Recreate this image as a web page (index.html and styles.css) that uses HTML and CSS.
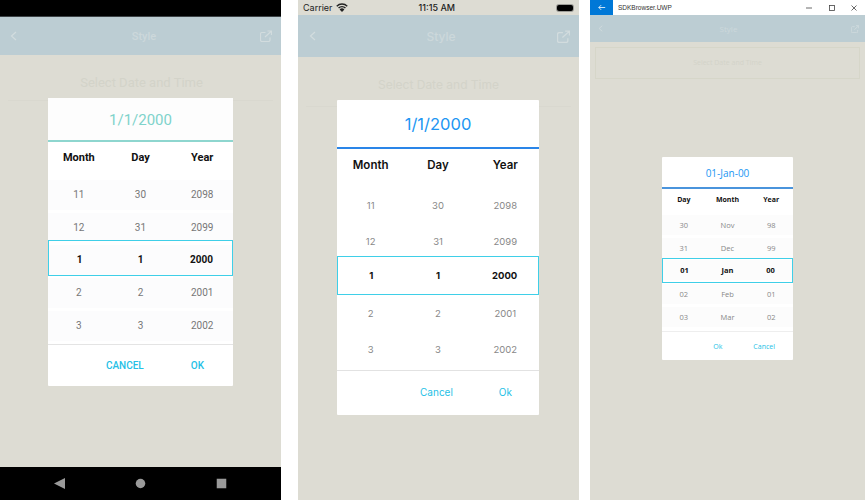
FILE: index.html
```html
<!DOCTYPE html>
<html lang="en">

<head>
    <meta charset="UTF-8">
    <meta name="viewport" content="width=device-width, initial-scale=1.0">
    <link rel="stylesheet" href="styles.css">

    <title>Date and Time Picker</title>
</head>

<body>
<div class="shots">

    <!-- android -->
    <div class="phone android">
        <div class="topbar"></div>
        <div class="header">
            <svg class="back" viewBox="0 0 7 10"><path d="M6 1 1.500 5 6 9"/></svg>
            <span class="page-title">Style</span>
            <svg class="share" viewBox="0 0 12 12"><path d="M5.500 2.500H2A1.500 1.500 0 0 0 .5 4v6A1.500 1.500 0 0 0 2 11.500h6.500A1.500 1.500 0 0 0 10 10V7.500M5 7l6-5.500M7.500 1h4v4"/></svg>
        </div>
        <div class="content">
            <div class="select">Select Date and Time</div>
        </div>
        <div class="navbar">
            <svg class="nav-icon" viewBox="0 0 12 12"><path d="M0 6 12 0v12z"/></svg>
            <svg class="nav-icon" viewBox="0 0 12 12"><circle cx="6" cy="6" r="5.200"/></svg>
            <svg class="nav-icon" viewBox="0 0 12 12"><rect x="0.800" y="0.800" width="10.400" height="10.400"/></svg>
        </div>
        <div class="dialog">
            <div class="dialog-title">1/1/2000</div>
            <div class="heads"><span>Month</span><span>Day</span><span>Year</span></div>
            <div class="wheel">
                <div class="row"><span>11</span><span>30</span><span>2098</span></div>
                <div class="row"><span>12</span><span>31</span><span>2099</span></div>
                <div class="row current"><span>1</span><span>1</span><span>2000</span></div>
                <div class="row"><span>2</span><span>2</span><span>2001</span></div>
                <div class="row"><span>3</span><span>3</span><span>2002</span></div>
            </div>
            <div class="buttons"><span>CANCEL</span><span>OK</span></div>
        </div>
    </div>

    <!-- ios -->
    <div class="phone ios">
        <div class="topbar">
            <span class="carrier">Carrier</span>
            <svg class="wifi" viewBox="0 0 16 12"><path d="M1 4.200a10 10 0 0 1 14 0M3.400 6.800a6.600 6.600 0 0 1 9.200 0"/><path class="dot" d="M8 12 4.800 8.600a4.500 4.500 0 0 1 6.400 0z"/></svg>
            <span class="clock">11:15 AM</span>
            <span class="battery"></span>
        </div>
        <div class="header">
            <svg class="back" viewBox="0 0 7 10"><path d="M6 1 1.500 5 6 9"/></svg>
            <span class="page-title">Style</span>
            <svg class="share" viewBox="0 0 12 12"><path d="M5.500 2.500H2A1.500 1.500 0 0 0 .5 4v6A1.500 1.500 0 0 0 2 11.500h6.500A1.500 1.500 0 0 0 10 10V7.500M5 7l6-5.500M7.500 1h4v4"/></svg>
        </div>
        <div class="content">
            <div class="select">Select Date and Time</div>
        </div>
        <div class="dialog">
            <div class="dialog-title">1/1/2000</div>
            <div class="heads"><span>Month</span><span>Day</span><span>Year</span></div>
            <div class="wheel">
                <div class="row"><span>11</span><span>30</span><span>2098</span></div>
                <div class="row"><span>12</span><span>31</span><span>2099</span></div>
                <div class="row current"><span>1</span><span>1</span><span>2000</span></div>
                <div class="row"><span>2</span><span>2</span><span>2001</span></div>
                <div class="row"><span>3</span><span>3</span><span>2002</span></div>
            </div>
            <div class="buttons"><span>Cancel</span><span>Ok</span></div>
        </div>
    </div>

    <!-- uwp -->
    <div class="phone uwp">
        <div class="topbar">
            <span class="win-back">
                <svg viewBox="0 0 10 8"><path d="M9 4H1M4 1 1 4l3 3"/></svg>
            </span>
            <span class="win-name">SDKBrowser.UWP</span>
            <svg class="win-btn" viewBox="0 0 8 8"><path d="M1 4h6"/></svg>
            <svg class="win-btn" viewBox="0 0 8 8"><rect x="1.500" y="1.500" width="5" height="5"/></svg>
            <svg class="win-btn" viewBox="0 0 8 8"><path d="m1.500 1.500 5 5m0-5-5 5"/></svg>
        </div>
        <div class="header">
            <svg class="back" viewBox="0 0 7 10"><path d="M6 1 1.500 5 6 9"/></svg>
            <span class="page-title">Style</span>
            <svg class="share" viewBox="0 0 12 12"><path d="M5.500 2.500H2A1.500 1.500 0 0 0 .5 4v6A1.500 1.500 0 0 0 2 11.500h6.500A1.500 1.500 0 0 0 10 10V7.500M5 7l6-5.500M7.500 1h4v4"/></svg>
        </div>
        <div class="content">
            <div class="select">Select Date and Time</div>
        </div>
        <div class="dialog">
            <div class="dialog-title">01-Jan-00</div>
            <div class="heads"><span>Day</span><span>Month</span><span>Year</span></div>
            <div class="wheel">
                <div class="row"><span>30</span><span>Nov</span><span>98</span></div>
                <div class="row"><span>31</span><span>Dec</span><span>99</span></div>
                <div class="row current"><span>01</span><span>Jan</span><span>00</span></div>
                <div class="row"><span>02</span><span>Feb</span><span>01</span></div>
                <div class="row"><span>03</span><span>Mar</span><span>02</span></div>
            </div>
            <div class="buttons"><span>Ok</span><span>Cancel</span></div>
        </div>
    </div>

</div>
</body>

</html>
```

FILE: styles.css
```css
* {
    margin: 0;
    padding: 0;
    box-sizing: border-box;
}

body {
    width: 865px;
    height: 500px;
    background: #fff;
    overflow: hidden;
}

.shots {
    display: flex;
    height: 500px;
}

.phone {
    display: flex;
    flex-direction: column;
    position: relative;
    height: 500px;
    background: #dddcd3;
}

/* shared bar */
.header {
    display: flex;
    align-items: center;
    justify-content: space-between;
    background: #bccdd3;
}

.header svg {
    fill: none;
    stroke: #d2dcde;
    stroke-width: 1.200;
    flex: none;
}

.page-title {
    color: #ccd8db;
}

.content {
    flex: 1;
}

.select {
    text-align: center;
    color: #d3d3c9;
}

/* shared dialog */
.dialog {
    position: absolute;
    display: flex;
    flex-direction: column;
    background: #fff;
    border-radius: 1px;
}

.dialog-title {
    text-align: center;
    border-bottom-style: solid;
}

.heads,
.row {
    display: grid;
    grid-template-columns: 1fr 1fr 1fr;
    align-items: center;
    text-align: center;
}

.heads {
    font-weight: 700;
    color: #111;
}

.row {
    color: #777;
}

.row.current {
    position: relative;
    z-index: 1;
    font-weight: 700;
    color: #111;
    background: #fff;
    border: 1px solid #3fcfe8;
}

.buttons {
    display: flex;
    justify-content: flex-end;
    align-items: center;
    flex: 1;
    color: #25bfe6;
    border-top-style: solid;
}

/* android */
.android {
    width: 281px;
    margin-right: 17px;
    font-family: Roboto, sans-serif;
}

.android .topbar {
    height: 17px;
    background: #000;
    border-bottom: 1px solid #3c4245;
}

.android .header {
    height: 38px;
    padding: 0 9px 0 10px;
}

.android .back {
    width: 7px;
    height: 10px;
}

.android .share {
    width: 12px;
    height: 12px;
}

.android .page-title {
    margin-left: 11px;
    font-size: 11px;
    font-weight: 500;
}

.android .select {
    height: 46px;
    margin: 0 8px;
    padding: 20px 0 0 2px;
    font-size: 13px;
    border-bottom: 1px solid #d9d8cf;
}

.navbar {
    display: flex;
    justify-content: space-between;
    align-items: center;
    height: 33px;
    padding: 0 54px;
    background: #000;
}

.nav-icon {
    width: 11px;
    height: 11px;
    fill: #9a9a9a;
}

.android .dialog {
    left: 48px;
    top: 98px;
    width: 185px;
    height: 288px;
}

.android .dialog-title {
    height: 44px;
    padding-top: 13px;
    font-size: 15px;
    color: #7fd3cb;
    background: #fdfdfd;
    border-bottom-width: 2px;
    border-bottom-color: #8ed6cf;
}

.android .heads {
    height: 37px;
    font-size: 11px;
    padding-bottom: 6px;
}

.android .row {
    height: 32.800px;
    font-size: 10px;
}

.android .row span {
    background: #fcfcfd;
    height: 30px;
    line-height: 30px;
}

.android .row.current {
    height: 36px;
    margin: -4.500px 0 0.300px;
    padding-top: 3px;
}

.android .buttons {
    gap: 47px;
    padding-right: 29px;
    margin-top: 2px;
    font-size: 10px;
    font-weight: 500;
    border-top-width: 1px;
    border-top-color: #e4e4e4;
}

/* ios */
.ios {
    width: 281px;
    margin-right: 11px;
    font-family: Inter, sans-serif;
}

.ios .topbar {
    display: flex;
    align-items: center;
    height: 15px;
    padding: 0 6px 0 5px;
    font-size: 9px;
    color: #222;
}

.wifi {
    width: 12px;
    height: 9px;
    margin-left: 3px;
    fill: none;
    stroke: #222;
    stroke-width: 1.900;
}

.wifi .dot {
    fill: #222;
    stroke: none;
}

.clock {
    margin-left: 71px;
    font-weight: 500;
}

.battery {
    width: 16px;
    height: 6px;
    margin-left: auto;
    background: #000;
    border-radius: 2px;
    box-shadow: 0 0 0 1px #9d9d98;
}

.ios .header {
    height: 42px;
    padding: 0 9px 0 11px;
}

.ios .back {
    width: 7px;
    height: 10px;
}

.ios .share {
    width: 13px;
    height: 13px;
}

.ios .page-title {
    margin-left: 9px;
    font-size: 12px;
    font-weight: 500;
}

.ios .select {
    height: 50px;
    margin: 0 8px;
    padding-top: 20px;
    font-size: 12px;
    border-bottom: 1px solid #d9d8cf;
}

.ios .dialog {
    left: 39px;
    top: 100px;
    width: 202px;
    height: 315px;
}

.ios .dialog-title {
    height: 49px;
    padding-top: 14px;
    font-size: 16.500px;
    color: #2196f3;
    border-bottom-width: 2px;
    border-bottom-color: #2a85e8;
}

.ios .heads {
    height: 38px;
    font-size: 11.500px;
    font-weight: 600;
    padding-bottom: 6px;
}

.ios .row {
    height: 36px;
    font-size: 9.500px;
    color: #888;
}

.ios .row.current {
    height: 39px;
    margin: -3px 0 0;
    color: #111;
}

.ios .buttons {
    gap: 46px;
    padding: 0 27px 2px 0;
    margin-top: 3px;
    font-size: 10px;
    border-top-width: 1px;
    border-top-color: #e2e2e2;
}

/* uwp */
.uwp {
    width: 275px;
    font-family: "Open Sans", sans-serif;
}

.uwp .topbar {
    display: flex;
    align-items: center;
    height: 15px;
    padding-right: 7px;
    background: #fff;
    font-family: "Liberation Sans", sans-serif;
    font-size: 6.500px;
    color: #333;
}

.win-back {
    display: flex;
    align-items: center;
    justify-content: center;
    width: 23px;
    height: 15px;
    background: #0078d7;
}

.win-back svg {
    width: 8px;
    height: 7px;
    fill: none;
    stroke: #fff;
    stroke-width: 1;
}

.win-name {
    flex: 1;
    padding-left: 5px;
}

.win-btn {
    width: 8px;
    height: 8px;
    margin-left: 14.500px;
    fill: none;
    stroke: #444;
    stroke-width: 0.800;
}

.uwp .header {
    height: 27px;
    padding: 0 6px 0 8px;
}

.uwp .back {
    width: 5px;
    height: 7px;
}

.uwp .share {
    width: 8px;
    height: 8px;
}

.uwp .page-title {
    margin-left: 3px;
    font-size: 8px;
}

.uwp .select {
    height: 32px;
    margin: 5px 5px 0;
    padding-top: 10px;
    font-size: 7px;
    border: 1px solid #d6d6c9;
}

.uwp .dialog {
    left: 72px;
    top: 157px;
    width: 131px;
    height: 203px;
}

.uwp .dialog-title {
    height: 32px;
    padding-top: 9px;
    font-size: 10px;
    color: #2196f3;
    border-bottom-width: 2px;
    border-bottom-color: #4a94dc;
}

.uwp .heads {
    height: 24px;
    font-size: 7px;
    padding-bottom: 3px;
}

.uwp .row {
    height: 23px;
    font-size: 7.500px;
    color: #888;
}

.uwp .row span {
    background: #fcfcfc;
    height: 20px;
    line-height: 20px;
}

.uwp .row.current {
    height: 25.500px;
    margin: -1.500px 0 -1px;
    color: #111;
}

.uwp .buttons {
    gap: 31px;
    padding-right: 18px;
    margin-top: 3px;
    font-size: 7px;
    border-top-width: 1px;
    border-top-color: #eeeeee;
}
```
